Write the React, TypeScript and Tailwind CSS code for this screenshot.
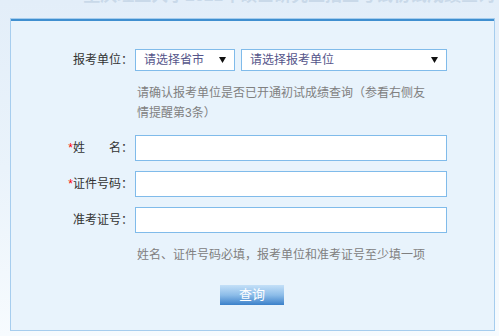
import React from 'react';

const font = { fontFamily: '"Liberation Sans", "Noto Sans CJK SC", sans-serif' };

const Arrow: React.FC = () => (
  <svg width="7" height="6" viewBox="0 0 7 6" className="shrink-0">
    <path d="M0 0 H7 L3.5 6 Z" fill="#111" />
  </svg>
);

const SelectBox: React.FC<{ text: string; width: string }> = ({ text, width }) => (
  <div
    className={`${width} h-[22px] bg-white border border-[#80bbea] flex items-center justify-between pl-[8px] pr-[8px] text-[12px] text-[#55558a]`}
  >
    <span>{text}</span>
    <Arrow />
  </div>
);

const Field: React.FC<{ label: React.ReactNode; required?: boolean }> = ({ label, required }) => (
  <div className="flex items-center">
    <div className="w-[124px] text-right text-[12px] text-[#333] pr-[2px] whitespace-pre">
      {required && <span className="text-[#ff0000]">*</span>}
      {label}
    </div>
    <input
      type="text"
      className="w-[312px] h-[26px] bg-white border border-[#80bbea] outline-none"
    />
  </div>
);

export default function App() {
  return (
    <div
      className="w-[499px] h-[336px] overflow-hidden bg-gradient-to-b from-[#e3eef9] via-[#eaf3fb] to-[#f7fbfe]"
      style={font}
    >
      {/* clipped page title */}
      <div className="h-[18px] overflow-hidden flex justify-end pr-[4px]">
        <div className="text-[17px] font-bold text-[#c9d9e9] leading-[20px] -translate-y-[14px] whitespace-nowrap">
          重庆理工大学2021年硕士研究生招生考试初试成绩查询
        </div>
      </div>

      <div className="ml-[10px] w-[485px] h-[313px] border border-[#a6cdee] bg-[#e8f3fc]">
        <div className="h-[2px] bg-[#3f8fd0]" />

        <div className="pt-[28px]">
          {/* 报考单位 */}
          <div className="flex items-center">
            <div className="w-[124px] text-right text-[12px] text-[#333] pr-[2px]">报考单位：</div>
            <div className="flex gap-[6px]">
              <SelectBox text="请选择省市" width="w-[100px]" />
              <SelectBox text="请选择报考单位" width="w-[206px]" />
            </div>
          </div>

          <div className="ml-[126px] mt-[12px] w-[294px] text-[12px] leading-[20px] text-[#808080]">
            请确认报考单位是否已开通初试成绩查询（参看右侧友情提醒第3条）
          </div>

          <div className="mt-[12px] flex flex-col gap-[10px]">
            <Field required label={'姓　　名：'} />
            <Field required label="证件号码：" />
            <Field label="准考证号：" />
          </div>

          <div className="ml-[126px] mt-[12px] text-[12px] leading-[20px] text-[#808080]">
            姓名、证件号码必填，报考单位和准考证号至少填一项
          </div>

          <div className="mt-[20px] flex">
            <button className="ml-[209px] w-[64px] h-[20px] bg-gradient-to-b from-[#c4e0f8] via-[#8dbde9] to-[#3a80c9] text-white text-[13px] leading-[20px]">
              查询
            </button>
          </div>
        </div>
      </div>
    </div>
  );
}
